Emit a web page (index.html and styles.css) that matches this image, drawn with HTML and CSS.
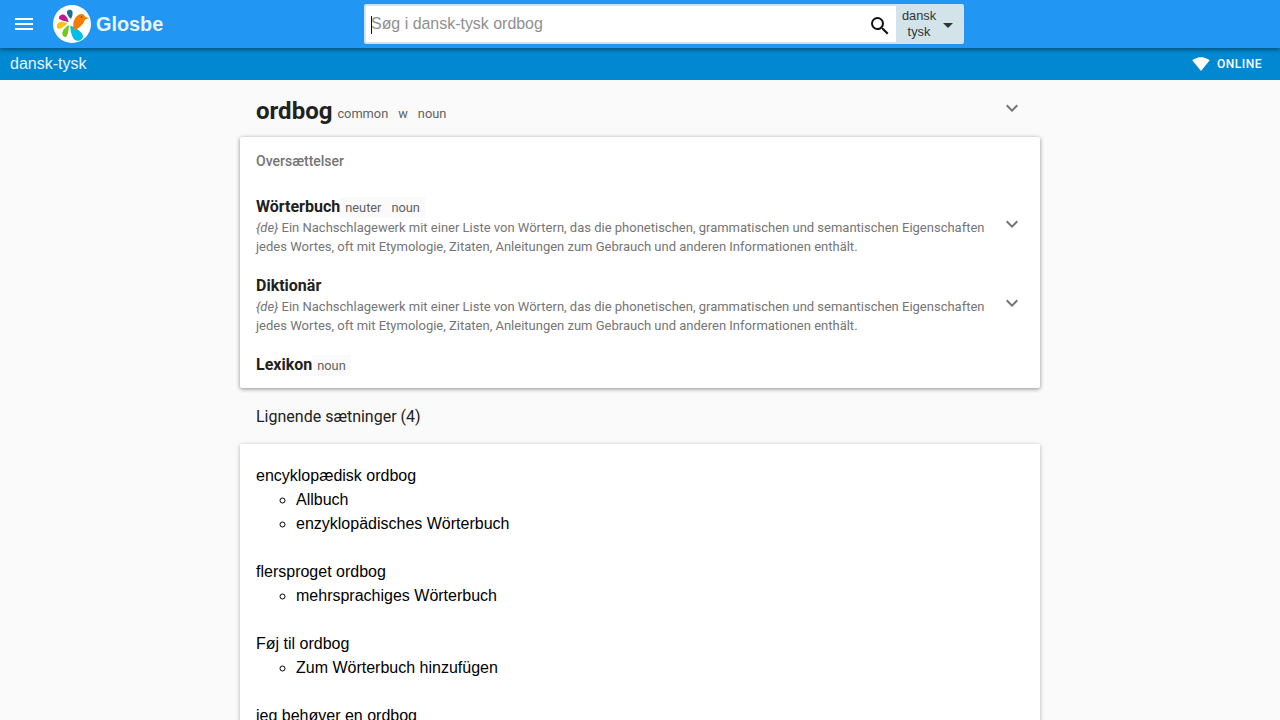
FILE: index.html
```html
<!DOCTYPE html>
<html lang="da">
<head>
<meta charset="utf-8">
<title>ordbog - dansk-tysk</title>
<link rel="stylesheet" href="styles.css">
</head>
<body>
<header class="topbar">
  <div class="brand">
    <svg class="menu-icon" width="24" height="24" viewBox="0 0 24 24"><path fill="#fff" d="M3 18h18v-2H3v2zm0-5h18v-2H3v2zm0-7v2h18V6H3z"/></svg>
    <svg class="logo" width="38" height="38" viewBox="0 0 38 38">
      <circle cx="19" cy="19" r="19" fill="#fff"/>
      <path fill="#1b6f94" d="M18 14C15 12 13.500 8.500 14 6.500 15 4 18.500 4 19.500 6.500 20 9 19 12 18 14z"/>
      <path fill="#c2188b" d="M15.500 17C12 16 7.500 15.500 6 13.500 5.500 11.500 7.500 9.500 10.500 9.500 13.500 10.500 15 14 15.500 17z"/>
      <path fill="#ffc107" d="M14.500 18.500C12 20 8 24.500 5.500 24 3 22.500 3.500 19 6 17.500 9 16 12 17.500 14.500 18.500z"/>
      <path fill="#76c81c" d="M16 20C15.500 24 15.500 30 13 32 10.500 32.500 8.500 29.500 9.500 27 10.500 24 13 21.500 16 20z"/>
      <path fill="#00bfe8" d="M17.500 20.500C21 22 29 26 30 31 30 35 25 37 22 35 18.500 32 17 25 17.500 20.500z"/>
      <path fill="#f57c00" d="M21 25C19 19 21 12 26 9.500 29 8 31.500 9.500 32 12L36.500 13 32 14.500C30.500 19 26 24 21 25z"/>
      <circle cx="28.500" cy="12" r=".7" fill="#5a2d00"/>
    </svg>
    <span class="brand-name">Glosbe</span>
  </div>
  <div class="search">
    <div class="search-input">
      <span class="caret"></span>
      <span class="placeholder">Søg i dansk-tysk ordbog</span>
      <svg class="search-icon" width="24" height="24" viewBox="0 0 24 24"><path fill="#111" d="M15.500 14h-.79l-.28-.27A6.470 6.470 0 0 0 16 9.500 6.500 6.500 0 1 0 9.500 16c1.610 0 3.090-.59 4.230-1.570l.27.28v.79l5 4.990L20.490 19l-4.990-5zm-6 0C7.010 14 5 11.990 5 9.500S7.010 5 9.500 5 14 7.010 14 9.500 11.990 14 9.500 14z"/></svg>
    </div>
    <div class="lang-select">
      <span class="lang-names">dansk<br>tysk</span>
      <span class="lang-arrow"></span>
    </div>
  </div>
</header>
<div class="subbar">
  <span class="subbar-title">dansk-tysk</span>
  <span class="online">
    <svg width="18" height="18" viewBox="0 0 24 24"><path fill="#fff" d="M12.010 21.490 23.640 7c-.45-.34-4.930-4-11.640-4C5.280 3 .81 6.660.36 7l11.630 14.490.01.010.01-.01z"/></svg>
    <span class="online-label">ONLINE</span>
  </span>
</div>
<main class="content">
  <div class="headword">
    <div class="headword-text">
      <h1>ordbog</h1>
      <span class="tags"><span>common</span><span>w</span><span>noun</span></span>
    </div>
    <svg class="chevron" width="24" height="24" viewBox="0 0 24 24"><path d="M7.410 8.590 12 13.170l4.590-4.580L18 10l-6 6-6-6z"/></svg>
  </div>
  <section class="card translations">
    <h2 class="card-label">Oversættelser</h2>
    <div class="tr-item">
      <div class="tr-body">
        <div class="tr-head"><strong>Wörterbuch</strong><span class="tags shaded"><span>neuter</span><span>noun</span></span></div>
        <p class="tr-def"><em>{de}</em> Ein Nachschlagewerk mit einer Liste von Wörtern, das die phonetischen, grammatischen und semantischen Eigenschaften jedes Wortes, oft mit Etymologie, Zitaten, Anleitungen zum Gebrauch und anderen Informationen enthält.</p>
      </div>
      <svg class="chevron" width="24" height="24" viewBox="0 0 24 24"><path d="M7.410 8.590 12 13.170l4.590-4.580L18 10l-6 6-6-6z"/></svg>
    </div>
    <div class="tr-item">
      <div class="tr-body">
        <div class="tr-head"><strong>Diktionär</strong></div>
        <p class="tr-def"><em>{de}</em> Ein Nachschlagewerk mit einer Liste von Wörtern, das die phonetischen, grammatischen und semantischen Eigenschaften jedes Wortes, oft mit Etymologie, Zitaten, Anleitungen zum Gebrauch und anderen Informationen enthält.</p>
      </div>
      <svg class="chevron" width="24" height="24" viewBox="0 0 24 24"><path d="M7.410 8.590 12 13.170l4.590-4.580L18 10l-6 6-6-6z"/></svg>
    </div>
    <div class="tr-item">
      <div class="tr-body">
        <div class="tr-head"><strong>Lexikon</strong><span class="tags shaded"><span>noun</span></span></div>
      </div>
    </div>
  </section>
  <h2 class="similar-title">Lignende sætninger (4)</h2>
  <section class="card phrases">
    <div class="phrase">encyklopædisk ordbog
      <ul><li>Allbuch</li><li>enzyklopädisches Wörterbuch</li></ul>
    </div>
    <div class="phrase">flersproget ordbog
      <ul><li>mehrsprachiges Wörterbuch</li></ul>
    </div>
    <div class="phrase">Føj til ordbog
      <ul><li>Zum Wörterbuch hinzufügen</li></ul>
    </div>
    <div class="phrase">jeg behøver en ordbog
      <ul><li>Ich brauche ein Wörterbuch</li></ul>
    </div>
  </section>
</main>
</body>
</html>
```
FILE: styles.css
```css
* { box-sizing: border-box; }
html, body { margin: 0; height: 100%; overflow: hidden; }
body { background: #fafafa; font-family: Roboto, sans-serif; color: #212121; }

.topbar {
  position: relative;
  z-index: 2;
  height: 48px;
  background: #2196f3;
  box-shadow: 0 2px 4px rgba(0, 0, 0, .4);
  display: flex;
  align-items: center;
}
.brand { width: 364px; display: flex; align-items: center; padding-left: 12px; }
.logo { margin-left: 17px; }
.brand-name {
  margin-left: 5px;
  font: bold 19.84px "Liberation Sans", Arial, sans-serif;
  color: #e8f4fe;
}
.search {
  width: 600px;
  height: 40px;
  display: flex;
  border: 2px solid #d2e3ef;
  border-radius: 2px;
  background: #d2e3ea;
}
.search-input {
  position: relative;
  width: 530px;
  background: #fff;
  display: flex;
  align-items: center;
  padding-left: 5px;
  font: 15.95px "Liberation Sans", Arial, sans-serif;
}
.placeholder { color: #8f8f8f; }
.caret {
  position: absolute;
  left: 5px;
  top: 10px;
  width: 1px;
  height: 18px;
  background: #111;
}
.search-icon { position: absolute; right: 4px; top: 8px; }
.lang-select { flex: 1; display: flex; align-items: center; font: 12.8px/16px "Liberation Sans", Arial, sans-serif; color: #333; }
.lang-names { width: 46px; text-align: center; }
.lang-arrow {
  margin-left: 1px;
  margin-top: 2px;
  border-left: 5px solid transparent;
  border-right: 5px solid transparent;
  border-top: 5px solid #333;
}

.subbar {
  height: 32px;
  background: #0288d1;
  color: #e8f4fc;
  display: flex;
  align-items: center;
  justify-content: space-between;
  padding: 0 18px 0 10px;
}
.subbar-title { font: 16px "Liberation Sans", Arial, sans-serif; }
.online { display: flex; align-items: center; gap: 7px; }
.online-label { font: 500 12px Roboto, sans-serif; letter-spacing: .5px; color: #fff; }

.content { width: 800px; margin: 0 auto; }
.headword {
  height: 57px;
  padding: 0 16px;
  display: flex;
  align-items: center;
  justify-content: space-between;
}
.headword > .chevron { margin-bottom: 2px; }
.headword-text { display: flex; align-items: center; margin-top: 5px; }
.headword-text .tags { margin-top: 5px; }
h1 { margin: 0; font: 700 24px Roboto, sans-serif; color: #212121; }
.tags { font-size: 12.8px; color: #616161; margin-left: 5px; display: inline-flex; gap: 10px; }
.tags.shaded { background: #fafafa; padding: 3px 5px; margin-left: 0; }
.chevron { fill: #757575; flex: none; }

.card { background: #fff; border-radius: 2px; box-shadow: 0 1px 4px rgba(0, 0, 0, .3); }
.translations { padding: 0 0 12px; box-shadow: 0 1px 4px rgba(0, 0, 0, .45); }
.card-label { margin: 0; padding: 16px; font: 500 14px/16px Roboto, sans-serif; color: #757575; }
.tr-item { display: flex; align-items: center; padding: 0 16px; gap: 8px; }
.tr-item + .tr-item { margin-top: 19.6px; }
.tr-item:first-of-type { margin-top: 12px; }
.tr-item > .chevron { margin-bottom: 6px; }
.tr-body { flex: 1; }
.tr-head { display: flex; align-items: baseline; height: 21px; }
.tr-head strong { font: 700 16px Roboto, sans-serif; color: #212121; }
.tr-def { margin: 0; font: 13px/19.2px Roboto, sans-serif; color: #757575; }

.similar-title { margin: 0; height: 56px; padding: 0 16px; display: flex; align-items: center; font: 400 16px Roboto, sans-serif; color: #212121; }
.phrases { padding: 20px 16px; font: 16px/24px "Liberation Sans", Arial, sans-serif; color: #000; min-height: 400px; }
.phrase { margin-bottom: 24px; }
.phrase ul { margin: 0; padding-left: 40px; list-style: circle; }
```
